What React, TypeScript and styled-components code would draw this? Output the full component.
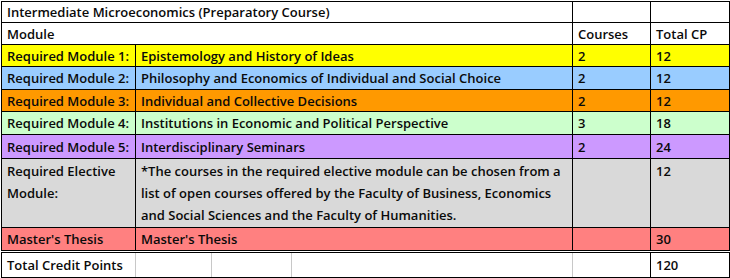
import React from "react";
import styled, { createGlobalStyle } from "styled-components";

const Global = createGlobalStyle`
  html, body { margin: 0; padding: 0; background: #fff; }
  body { padding: 1px 0 0 1px; font-family: "Open Sans", "Noto Sans", sans-serif; }
`;

const Table = styled.table`
  border-collapse: collapse;
  table-layout: fixed;
  width: 728px;
  font-family: "Open Sans", "Noto Sans", sans-serif;
  font-size: 13px;
  font-weight: 600;
  color: #0a0a0a;
  border: 1px solid #000;
`;

const Row = styled.tr<{ $bg?: string; $h?: number; $double?: boolean }>`
  background: ${(p) => p.$bg || "#fff"};
  height: ${(p) => p.$h || 22}px;
  ${(p) => (p.$double ? "border-bottom: 3px double #000;" : "")}
`;

const Cell = styled.td<{ $top?: boolean; $lightRight?: boolean; $lightLeft?: boolean }>`
  border: 1px solid #000;
  ${(p) => (p.$lightRight ? "border-right-color: #c8c8c8;" : "")}
  ${(p) => (p.$lightLeft ? "border-left-color: #c8c8c8;" : "")}
  padding: ${(p) => (p.$top ? "1px 5px 0" : "0 5px")};
  vertical-align: ${(p) => (p.$top ? "top" : "middle")};
  white-space: nowrap;
  line-height: ${(p) => (p.$top ? "22px" : "16px")};
  overflow: hidden;
`;

const SplitCell = styled.td`
  border: 1px solid #000;
  border-left: 1px solid #c8c8c8;
  border-right: 1px solid #c8c8c8;
  padding: 0;
`;

const Split = styled.div`
  display: grid;
  grid-template-columns: 76px 80px 1fr;
  height: 24px;
`;

const Blank = styled.div<{ $line?: boolean }>`
  border-right: ${(p) => (p.$line ? "1px solid #c8c8c8" : "none")};
`;

const modules = [
  { label: "Required Module 1:", name: "Epistemology and History of Ideas", c: "2", cp: "12", bg: "#ffff00", h: 22 },
  { label: "Required Module 2:", name: "Philosophy and Economics of Individual and Social Choice", c: "2", cp: "12", bg: "#99ccff", h: 23 },
  { label: "Required Module 3:", name: "Individual and Collective Decisions", c: "2", cp: "12", bg: "#ff9900", h: 22 },
  { label: "Required Module 4:", name: "Institutions in Economic and Political Perspective", c: "3", cp: "18", bg: "#ccffcc", h: 23 },
  { label: "Required Module 5:", name: "Interdisciplinary Seminars", c: "2", cp: "24", bg: "#cc99ff", h: 24 },
];

export default function App() {
  return (
    <>
      <Global />
      <Table>
        <colgroup>
          <col style={{ width: 134 }} />
          <col style={{ width: 437 }} />
          <col style={{ width: 78 }} />
          <col style={{ width: 79 }} />
        </colgroup>
        <tbody>
          <Row $h={21}>
            <Cell colSpan={2}>Intermediate Microeconomics (Preparatory Course)</Cell>
            <Cell />
            <Cell />
          </Row>
          <Row $h={22}>
            <Cell colSpan={2}>Module</Cell>
            <Cell>Courses</Cell>
            <Cell>Total CP</Cell>
          </Row>
          {modules.map((m) => (
            <Row key={m.label} $bg={m.bg} $h={m.h}>
              <Cell>{m.label}</Cell>
              <Cell>{m.name}</Cell>
              <Cell>{m.c}</Cell>
              <Cell>{m.cp}</Cell>
            </Row>
          ))}
          <Row $bg="#d9d9d9" $h={69}>
            <Cell $top>
              Required Elective
              <br />
              Module:
            </Cell>
            <Cell $top>
              *The courses in the required elective module can be chosen from a
              <br />
              list of open courses offered by the Faculty of Business, Economics
              <br />
              and Social Sciences and the Faculty of Humanities.
            </Cell>
            <Cell />
            <Cell $top>12</Cell>
          </Row>
          <Row $bg="#ff8080" $h={24} $double>
            <Cell>Master's Thesis</Cell>
            <Cell>Master's Thesis</Cell>
            <Cell />
            <Cell>30</Cell>
          </Row>
          <Row $h={24}>
            <Cell $lightRight>Total Credit Points</Cell>
            <SplitCell>
              <Split>
                <Blank $line />
                <Blank $line />
                <Blank />
              </Split>
            </SplitCell>
            <Cell $lightLeft />
            <Cell>120</Cell>
          </Row>
        </tbody>
      </Table>
    </>
  );
}
